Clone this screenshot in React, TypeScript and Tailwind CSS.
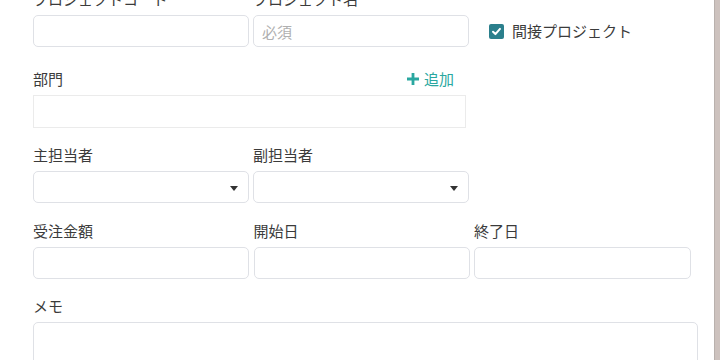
import React, { useState } from 'react';

const font = { fontFamily: '"Noto Sans CJK JP", "Noto Sans", sans-serif' };

const inputCls =
  'h-[32px] w-full rounded-[5px] border border-[#dfe1e6] bg-white px-2 text-[15px] text-[#333] placeholder-[#b0b0b0] outline-none';

const Label: React.FC<{ children: React.ReactNode }> = ({ children }) => (
  <div className="mb-[6px] h-[20px] text-[15px] leading-[20px] text-[#3b3b3b]">{children}</div>
);

const SelectBox: React.FC = () => (
  <div className={`${inputCls} relative`}>
    <span className="absolute right-[10px] top-[14px] h-0 w-0 border-x-[4px] border-t-[5px] border-x-transparent border-t-[#333]" />
  </div>
);

export default function App() {
  const [indirect, setIndirect] = useState(true);

  return (
    <div className="flex h-[360px] w-[720px] overflow-hidden bg-white" style={font}>
      <div className="flex-1 overflow-hidden">
        <div className="-mt-[11px] pl-[33px]">
          {/* Row 1 */}
          <div className="grid grid-cols-[216px_216px_216px] gap-x-[4px]">
            <div>
              <Label>プロジェクトコード</Label>
              <input className={inputCls} />
            </div>
            <div>
              <Label>プロジェクト名</Label>
              <input className={inputCls} placeholder="必須" />
            </div>
            <div className="flex items-end">
              <label className="flex h-[32px] items-center gap-[8px] pl-[16px] text-[15px] text-[#3b3b3b]">
                <span
                  onClick={() => setIndirect(!indirect)}
                  className="flex h-[15px] w-[15px] items-center justify-center rounded-[2px] bg-[#2b7f8c]"
                >
                  {indirect && (
                    <svg width="11" height="11" viewBox="0 0 12 12">
                      <path d="M2.2 6.3 L4.8 8.8 L9.8 3.2" fill="none" stroke="white" strokeWidth="2.2" strokeLinecap="round" strokeLinejoin="round" />
                    </svg>
                  )}
                </span>
                間接プロジェクト
              </label>
            </div>
          </div>

          {/* 部門 */}
          <div className="mt-[22px] w-[433px]">
            <div className="mb-[6px] flex h-[20px] items-center justify-between pr-[12px] text-[15px] leading-[20px]">
              <span className="text-[#3b3b3b]">部門</span>
              <span className="flex items-center gap-[4px] text-[#2aa7a0]">
                <svg width="14" height="14" viewBox="0 0 14 14">
                  <path d="M7 1 V13 M1 7 H13" stroke="#2aa7a0" strokeWidth="2.8" />
                </svg>
                追加
              </span>
            </div>
            <div className="h-[33px] w-full border border-[#ebebeb] bg-white" />
          </div>

          {/* 担当者 */}
          <div className="mt-[17px] grid grid-cols-[216px_216px] gap-x-[4px]">
            <div>
              <Label>主担当者</Label>
              <SelectBox />
            </div>
            <div>
              <Label>副担当者</Label>
              <SelectBox />
            </div>
          </div>

          {/* 金額・日付 */}
          <div className="mt-[18px] grid grid-cols-[216px_216px_217px] gap-x-[4.5px]">
            <div>
              <Label>受注金額</Label>
              <input className={inputCls} />
            </div>
            <div>
              <Label>開始日</Label>
              <input className={inputCls} />
            </div>
            <div>
              <Label>終了日</Label>
              <input className={inputCls} />
            </div>
          </div>

          {/* メモ */}
          <div className="mt-[17px] w-[665px]">
            <Label>メモ</Label>
            <textarea className="h-[80px] w-full resize-none rounded-[5px] border border-[#dfe1e6] bg-white outline-none" />
          </div>
        </div>
      </div>
      <div className="w-[6px] border-l border-[#b9b1ad] bg-[#cdc2be]" />
    </div>
  );
}
